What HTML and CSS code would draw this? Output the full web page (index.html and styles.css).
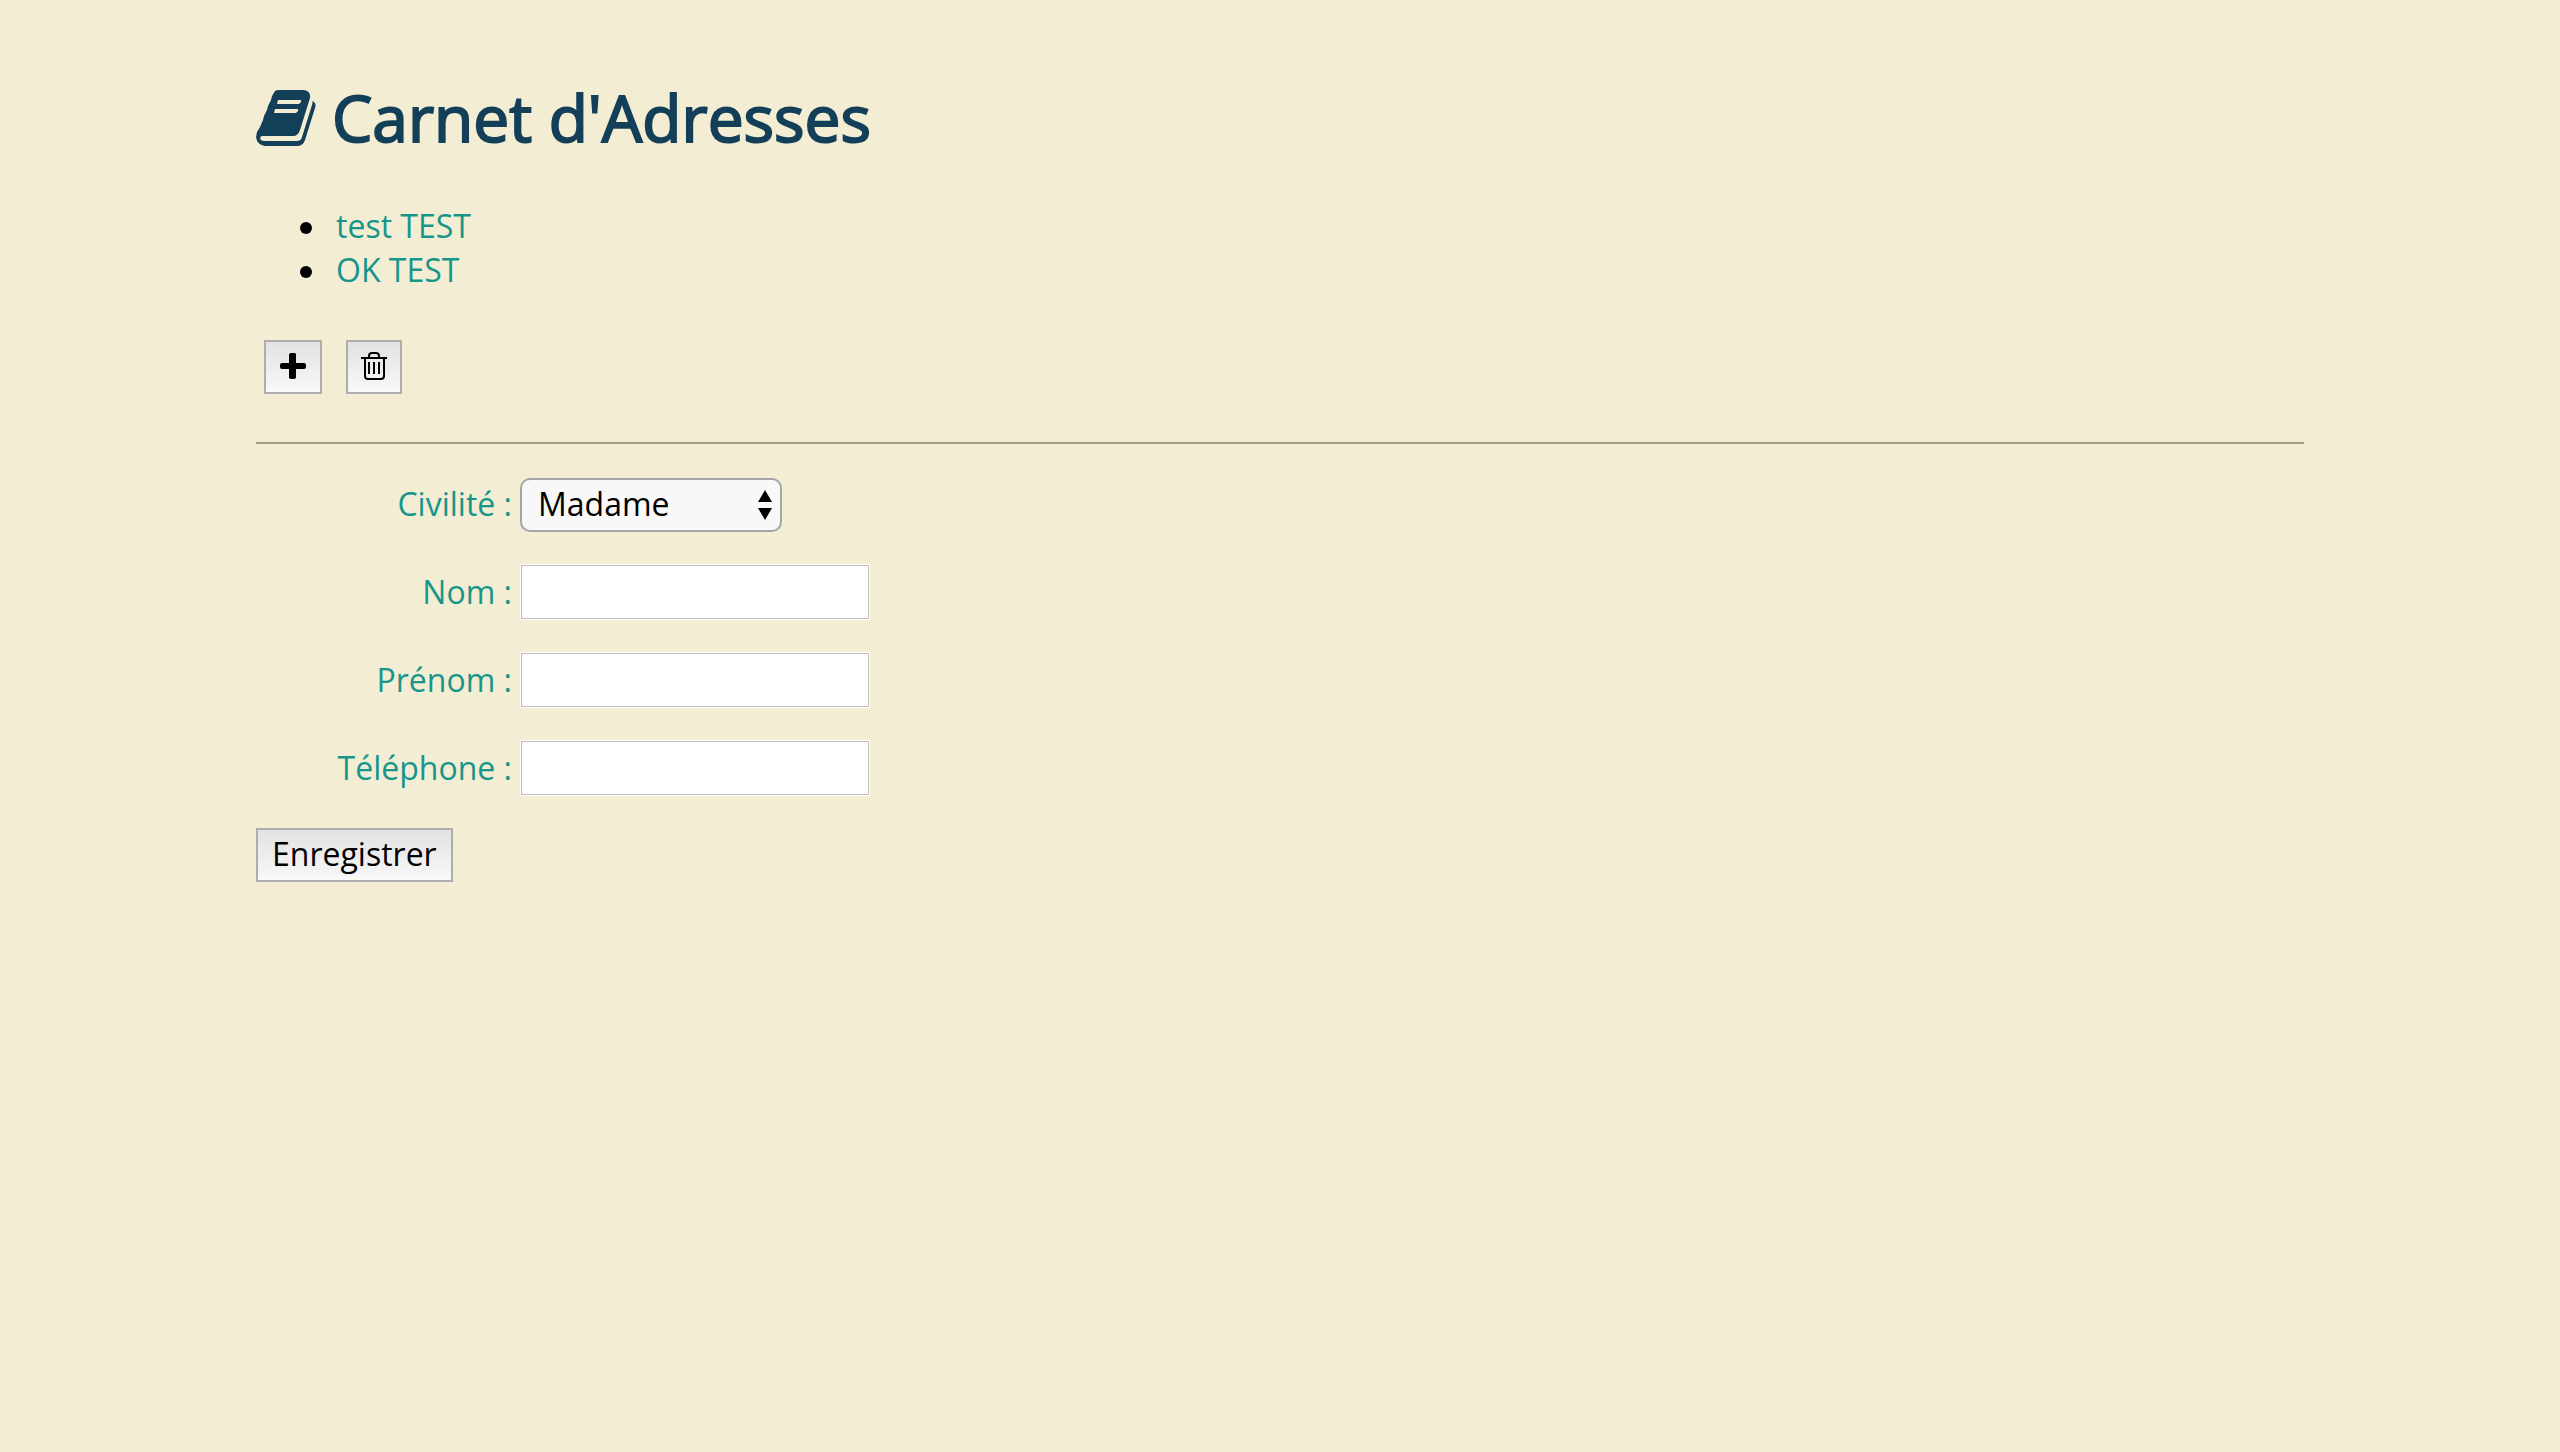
FILE: index.html
```html
<!DOCTYPE html>
<html lang="fr">
<head>
  <meta charset="utf-8">
  <title>Carnet d'Adresses</title>
  <link rel="stylesheet" href="styles.css">
</head>
<body>
  <header>
    <h1 class="title">
      <svg class="title-icon" viewBox="0 0 60 56" aria-hidden="true">
        <path fill="currentColor" fill-rule="evenodd" d="M23 0H48Q55 1 54 8L44 40Q42 46 37 46H6Q3 47 5 50Q6 51 9 51H41Q45 51 46 47L56 15Q57 12 56 11Q61 13 59 18L49 50Q47 56 41 56H9Q1 55 0 47L1 42L4 37L7 30L8 26L11 20L12 16L15 10L16 6L19 1Q20 0 23 0ZM22 10L21 14H43L45 12V10ZM19 19L18 23H40L42 21V19Z"/>
      </svg>
      <span>Carnet d'Adresses</span>
    </h1>
  </header>
  <main>
    <ul class="contacts">
      <li><a href="#contact-1">test TEST</a></li>
      <li><a href="#contact-2">OK TEST</a></li>
    </ul>
    <div class="toolbar">
      <button class="button" type="button" aria-label="Ajouter">
        <svg class="plus-icon" viewBox="0 0 26 26" aria-hidden="true">
          <path fill="currentColor" d="M11 0H15Q16 0 16 2V10H24Q26 10 26 12V14Q26 16 24 16H16V24Q16 26 14 26H12Q9 26 9 24V16H2Q0 16 0 14V12Q0 10 2 10H9V2Q9 0 11 0Z"/>
        </svg>
      </button>
      <button class="button button-trash" type="button" aria-label="Supprimer">
        <svg class="trash-icon" viewBox="0 0 26 28" aria-hidden="true" fill="none" stroke="currentColor" stroke-width="2">
          <path d="M0 6H26M8 6V4Q8 1 11 1H15Q18 1 18 4V6M4 6V24Q4 27 7 27H20Q23 27 23 24V6"/>
          <path d="M8 10V22M13 10V22M18 10V22"/>
        </svg>
      </button>
    </div>
    <hr class="separator">
    <form class="form">
      <div class="row">
        <label for="civilite">Civilité :</label>
        <span class="select-box">
          <select id="civilite">
            <option>Madame</option>
            <option>Mademoiselle</option>
            <option>Monsieur</option>
          </select>
          <svg class="select-arrows" viewBox="0 0 14 30" aria-hidden="true"><path d="M7 0L14 12H0ZM0 18H14L7 30Z"/></svg>
        </span>
      </div>
      <div class="row">
        <label for="nom">Nom :</label>
        <input id="nom" type="text">
      </div>
      <div class="row">
        <label for="prenom">Prénom :</label>
        <input id="prenom" type="text">
      </div>
      <div class="row">
        <label for="telephone">Téléphone :</label>
        <input id="telephone" type="tel">
      </div>
      <button class="button" type="submit">Enregistrer</button>
    </form>
  </main>
</body>
</html>
```
FILE: styles.css
```css
* {
  box-sizing: border-box;
}

body {
  margin: 0;
  padding: 74px 10%;
  background: #f3edd3;
  color: #000;
  font-family: "Open Sans", sans-serif;
  font-size: 32px;
  line-height: 44px;
}

.title {
  display: flex;
  align-items: center;
  gap: 16px;
  margin: 0 0 42px;
  color: #143f59;
  font-size: 64px;
  font-weight: 400;
  line-height: 88px;
  -webkit-text-stroke: 2px currentColor;
}

.title-icon {
  width: 60px;
  height: 56px;
}

.title-icon path {
  stroke: none;
}

.contacts {
  margin: 0 0 48px;
  padding-left: 44px;
  list-style: none;
}

.contacts li {
  display: flex;
  align-items: center;
  gap: 24px;
}

.contacts li::before {
  width: 12px;
  height: 12px;
  margin-top: 4px;
  border-radius: 50%;
  background: #000;
  content: "";
}

.contacts a {
  color: #16968b;
  text-decoration: none;
}

.toolbar {
  display: flex;
  gap: 24px;
  padding-left: 8px;
}

.button {
  display: flex;
  align-items: center;
  justify-content: center;
  height: 54px;
  padding: 0 14px 2px;
  border: 2px solid #adadad;
  background: linear-gradient(#e2e2e2, #f8f8f8);
  color: #000;
  font: inherit;
}

.button-trash {
  width: 56px;
  padding: 0 13px 2px;
}

.plus-icon {
  width: 26px;
  height: 26px;
}

.trash-icon {
  width: 26px;
  height: 28px;
}

.separator {
  height: 2px;
  margin: 48px 0 32px;
  border: 0;
  background: #a89a88;
}

.form {
  display: flex;
  flex-direction: column;
  align-items: flex-start;
  gap: 32px;
}

.row {
  display: flex;
  align-items: flex-end;
  gap: 8px;
  height: 56px;
}

.row label {
  width: 256px;
  padding-bottom: 6px;
  color: #16968b;
  text-align: right;
}

.row input {
  width: 350px;
  height: 56px;
  padding: 0 8px;
  border: 1px solid #fff;
  outline: 1px solid #babdc2;
  outline-offset: -2px;
  background: #fff;
  font: inherit;
}

.select-box {
  display: grid;
  align-items: center;
}

.select-box > * {
  grid-area: 1 / 1;
}

.select-box select {
  width: 262px;
  height: 54px;
  padding: 0 48px 2px 16px;
  appearance: none;
  border: 2px solid #a5a5a8;
  border-radius: 10px;
  background: #f8f8f8;
  color: #000;
  font: inherit;
}

.select-arrows {
  justify-self: end;
  width: 14px;
  height: 30px;
  margin-right: 10px;
  pointer-events: none;
}
```
